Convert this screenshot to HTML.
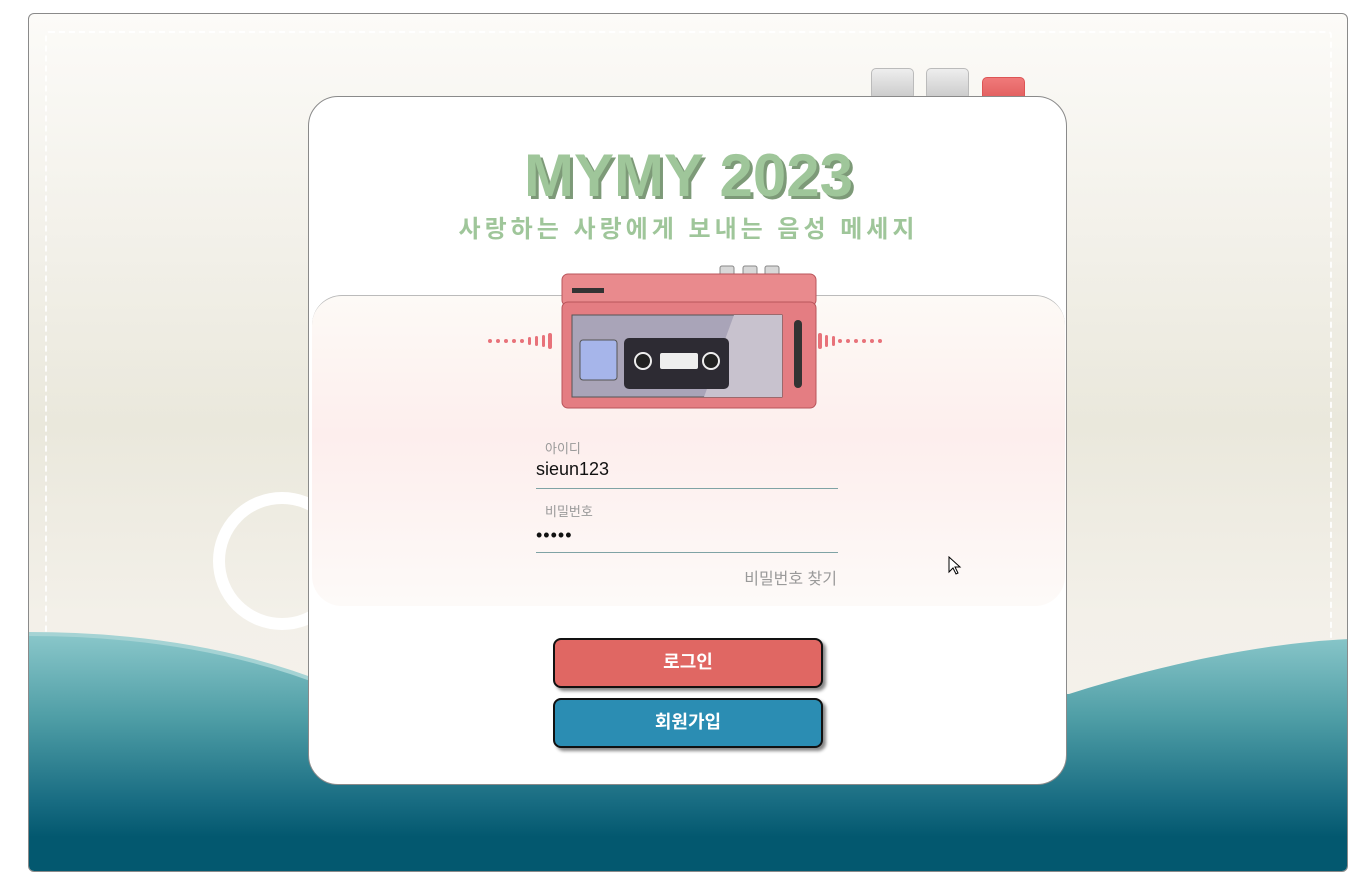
<!DOCTYPE html>
<html><head><meta charset="utf-8"><style>
*{margin:0;padding:0;box-sizing:border-box}
body{width:1357px;height:883px;background:#fff;position:relative;overflow:hidden;font-family:"Liberation Sans","Noto Sans CJK KR",sans-serif}
.frame{position:absolute;left:28px;top:13px;width:1320px;height:859px;border:1px solid #8a8a8a;border-radius:6px;overflow:hidden;background:linear-gradient(#fcfbf8 0%,#f3f1ea 25%,#eae8dc 48%,#f3f0e9 70%,#f6f3ee 100%)}
.dash{position:absolute;left:16px;top:17px;width:1287px;height:700px;border:2px dashed rgba(255,255,255,.9);border-bottom:none;border-radius:4px}
.ring{position:absolute;left:184px;top:478px;width:138px;height:138px;border:12px solid #fff;border-radius:50%}
.key{position:absolute;top:54px;width:43px;height:32px;border-radius:5px;background:linear-gradient(#eee,#c9c9c9);border:1px solid #bbb}
.card{position:absolute;left:308px;top:96px;width:759px;height:689px;background:#fff;border:1px solid #8a8a8a;border-radius:30px;overflow:hidden}
.panel{position:absolute;left:3px;top:198px;width:753px;height:311px;border-radius:30px;border-top:1px solid #bbb;background:linear-gradient(#fdfaf6 0%,#fdeeed 45%,#fdfaf8 100%)}
.title{position:absolute;left:0;width:759px;top:44px;text-align:center;font-size:60px;font-weight:900;color:#9fc69a;text-shadow:3px 3px 0 #7d9a78;font-family:"Liberation Sans",sans-serif}
.sub{position:absolute;left:0;width:759px;top:112px;text-align:center;font-size:24px;color:#9fc69a;letter-spacing:4px;font-weight:bold}
.lbl{position:absolute;left:236px;font-size:13px;color:#999}
.val{position:absolute;left:227px;font-size:18px;color:#111}
.line{position:absolute;left:227px;width:302px;height:1px;background:#7fa3a5}
.find{position:absolute;right:229px;top:468px;font-size:16px;color:#9a9a9a}
.btn{position:absolute;left:244px;width:270px;height:50px;border:2px solid #111;border-radius:8px;color:#fff;font-weight:bold;font-size:18px;text-align:center;line-height:45px;box-shadow:3px 3px 3px #888}
</style></head><body>
<div class="frame">
<div class="dash"></div>
<div class="ring"></div>
<svg style="position:absolute;left:0;top:0" width="1320" height="859">
<defs><linearGradient id="w" x1="0" y1="620" x2="0" y2="859" gradientUnits="userSpaceOnUse"><stop offset="0" stop-color="#8ac7ca"/><stop offset=".35" stop-color="#4f9ea6"/><stop offset=".7" stop-color="#186c82"/><stop offset=".85" stop-color="#03586f"/><stop offset="1" stop-color="#03586f"/></linearGradient></defs>
<path d="M0 620 C120 620 220 640 300 672 L1040 680 C1150 645 1250 628 1320 625 L1320 859 L0 859Z" fill="url(#w)"/>
<path d="M0 620 C120 620 220 640 300 672" stroke="#a5d3d4" stroke-width="4" fill="none"/>
</svg>
<div class="key" style="left:842px"></div>
<div class="key" style="left:897px"></div>
<div class="key" style="left:953px;top:63px;height:24px;background:linear-gradient(#f07a7a,#e05c5c);border-color:#d55"></div>
</div>
<div class="card">
<div class="title">MYMY 2023</div>
<div class="sub">사랑하는 사랑에게 보내는 음성 메세지</div>
<div class="panel"></div>
<svg style="position:absolute;left:175px;top:165px" width="410" height="150">
<g fill="#e8727a"><circle cx="6" cy="79" r="2"/><circle cx="14" cy="79" r="2"/><circle cx="22" cy="79" r="2"/><circle cx="30" cy="79" r="2"/><circle cx="38" cy="79" r="2"/><rect x="44" y="75" width="3" height="8" rx="1.5"/><rect x="51" y="74" width="3" height="10" rx="1.5"/><rect x="58" y="73" width="3" height="12" rx="1.5"/><rect x="64" y="71" width="4" height="16" rx="2"/>
<rect x="334" y="71" width="4" height="16" rx="2"/><rect x="341" y="73" width="3" height="12" rx="1.5"/><rect x="348" y="74" width="3" height="10" rx="1.5"/><circle cx="356" cy="79" r="2"/><circle cx="364" cy="79" r="2"/><circle cx="372" cy="79" r="2"/><circle cx="380" cy="79" r="2"/><circle cx="388" cy="79" r="2"/><circle cx="396" cy="79" r="2"/></g>
<rect x="236" y="4" width="14" height="10" rx="2" fill="#d8d8d8" stroke="#888"/><rect x="259" y="4" width="14" height="10" rx="2" fill="#d8d8d8" stroke="#888"/><rect x="281" y="4" width="14" height="10" rx="2" fill="#d8d8d8" stroke="#888"/>
<rect x="78" y="12" width="254" height="32" rx="6" fill="#e98a8d" stroke="#b9555b"/>
<rect x="88" y="26" width="32" height="5" fill="#333"/>
<rect x="78" y="40" width="254" height="106" rx="6" fill="#e47d82" stroke="#b9555b"/>
<rect x="88" y="53" width="210" height="82" fill="#a9a4b8" stroke="#555"/>
<polygon points="250,53 298,53 298,135 220,135" fill="#c8c2ce"/>
<rect x="96" y="78" width="37" height="40" rx="3" fill="#a6b5ea" stroke="#555"/>
<rect x="140" y="76" width="105" height="51" rx="5" fill="#2d2b33"/>
<circle cx="159" cy="99" r="8" fill="#222" stroke="#eee" stroke-width="2"/><circle cx="227" cy="99" r="8" fill="#222" stroke="#eee" stroke-width="2"/>
<rect x="176" y="91" width="38" height="16" rx="2" fill="#eee"/>
<rect x="310" y="58" width="8" height="68" rx="4" fill="#333"/>
</svg>
<div class="lbl" style="top:341px">아이디</div>
<div class="val" style="top:362px">sieun123</div>
<div class="line" style="top:391px"></div>
<div class="lbl" style="top:404px">비밀번호</div>
<div class="val" style="top:428px;letter-spacing:1px">•••••</div>
<div class="line" style="top:455px"></div>
<div class="find">비밀번호 찾기</div>
<div class="btn" style="top:541px;background:#e06763">로그인</div>
<div class="btn" style="top:601px;background:#2b8db3">회원가입</div>
</div>
<svg style="position:absolute;left:948px;top:556px" width="14" height="20"><path d="M1 1 L1 16 L5 12 L8 18 L10 17 L7 11 L12 11Z" fill="#fff" stroke="#000"/></svg>
</body></html>
